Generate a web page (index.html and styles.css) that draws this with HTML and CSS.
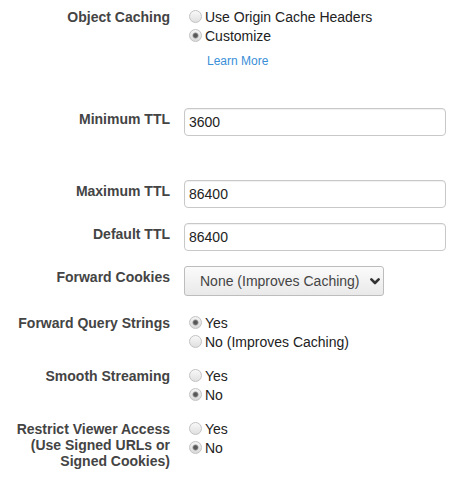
FILE: index.html
```html
<!DOCTYPE html>
<html>
<head>
<meta charset="utf-8">
<link rel="stylesheet" href="styles.css">
</head>
<body>
<div class="form">
  <div class="row radio-row gap-caching">
    <div class="label">Object Caching</div>
    <div class="control">
      <label class="opt"><input type="radio" name="oc"><span>Use Origin Cache Headers</span></label>
      <label class="opt"><input type="radio" name="oc" checked><span>Customize</span></label>
      <a class="learn" href="#">Learn More</a>
    </div>
  </div>

  <div class="row input-row gap-min">
    <div class="label">Minimum TTL</div>
    <div class="control"><input class="text" type="text" value="3600"></div>
  </div>

  <div class="row input-row">
    <div class="label">Maximum TTL</div>
    <div class="control"><input class="text" type="text" value="86400"></div>
  </div>

  <div class="row input-row">
    <div class="label">Default TTL</div>
    <div class="control"><input class="text" type="text" value="86400"></div>
  </div>

  <div class="row input-row gap-select">
    <div class="label">Forward Cookies</div>
    <div class="control">
      <div class="select">
        <span>None (Improves Caching)</span>
        <svg class="chev" width="10" height="7" viewBox="0 0 10 7"><polyline points="1.4,1.4 5,5 8.6,1.4" fill="none" stroke="#333" stroke-width="2.6" stroke-linecap="round" stroke-linejoin="round"/></svg>
      </div>
    </div>
  </div>

  <div class="row radio-row">
    <div class="label">Forward Query Strings</div>
    <div class="control">
      <label class="opt"><input type="radio" name="fq" checked><span>Yes</span></label>
      <label class="opt"><input type="radio" name="fq"><span>No (Improves Caching)</span></label>
    </div>
  </div>

  <div class="row radio-row">
    <div class="label">Smooth Streaming</div>
    <div class="control">
      <label class="opt"><input type="radio" name="ss"><span>Yes</span></label>
      <label class="opt"><input type="radio" name="ss" checked><span>No</span></label>
    </div>
  </div>

  <div class="row radio-row">
    <div class="label">Restrict Viewer Access<br>(Use Signed URLs or<br>Signed Cookies)</div>
    <div class="control">
      <label class="opt"><input type="radio" name="rv"><span>Yes</span></label>
      <label class="opt"><input type="radio" name="rv" checked><span>No</span></label>
    </div>
  </div>
</div>
</body>
</html>
```

FILE: styles.css
```css
html, body {
  background: #ffffff;
}
body {
  margin: 8px;
  font-family: "Liberation Sans", Arial, sans-serif;
  font-size: 14px;
  color: #222;
}
.form {
  display: flex;
  flex-direction: column;
}
.row {
  display: flex;
  align-items: flex-start;
  gap: 14px;
  margin-bottom: 15px;
}
.label {
  width: 162px;
  flex: none;
  text-align: right;
  font-weight: bold;
  color: #444;
  line-height: 16px;
}
.radio-row .label {
  padding-top: 1px;
}
.input-row .label {
  padding-top: 3px;
}
.control {
  width: 262px;
  display: flex;
  flex-direction: column;
  align-items: flex-start;
}
.gap-caching { margin-bottom: 39px; }
.gap-min { margin-bottom: 44px; }
.gap-select { margin-bottom: 18px; }

.opt {
  display: flex;
  align-items: flex-start;
  height: 19px;
  line-height: 19px;
  color: #222;
}
.opt input {
  appearance: none;
  -webkit-appearance: none;
  box-sizing: border-box;
  width: 13px;
  height: 13px;
  margin: 2px 3px 0 5px;
  border-radius: 50%;
  border: 1px solid #c2c2c2;
  background: linear-gradient(#f8f8f8, #e0e0e0);
  flex: none;
}
.opt input:checked {
  background:
    radial-gradient(circle at 50% 50%, #555 0, #5a5a5a 1.8px, rgba(100,100,100,0.45) 2.8px, rgba(0,0,0,0) 3.4px),
    linear-gradient(#f4f4f4, #dadada);
}
.learn {
  margin-top: 7px;
  margin-left: 23px;
  font-size: 12px;
  line-height: 16px;
  color: #3a8fd8;
  text-decoration: none;
}
.text {
  box-sizing: border-box;
  width: 262px;
  height: 28px;
  margin: 0;
  padding: 0 4px;
  border: 1px solid #c8c8c8;
  border-radius: 4px;
  box-shadow: inset 0 1px 1px rgba(0,0,0,0.06);
  font-family: "Liberation Sans", Arial, sans-serif;
  font-size: 14px;
  color: #222;
  background: #fff;
  outline: none;
}
.select {
  box-sizing: border-box;
  width: 200px;
  height: 30px;
  display: flex;
  align-items: center;
  padding-left: 15px;
  border: 1px solid #bdbdbd;
  border-radius: 3px;
  background: linear-gradient(#fbfbfb, #e9e9e9);
  color: #444;
  font-size: 14px;
  line-height: 16px;
}
.chev {
  margin-left: 10px;
  margin-top: 1px;
}
```
